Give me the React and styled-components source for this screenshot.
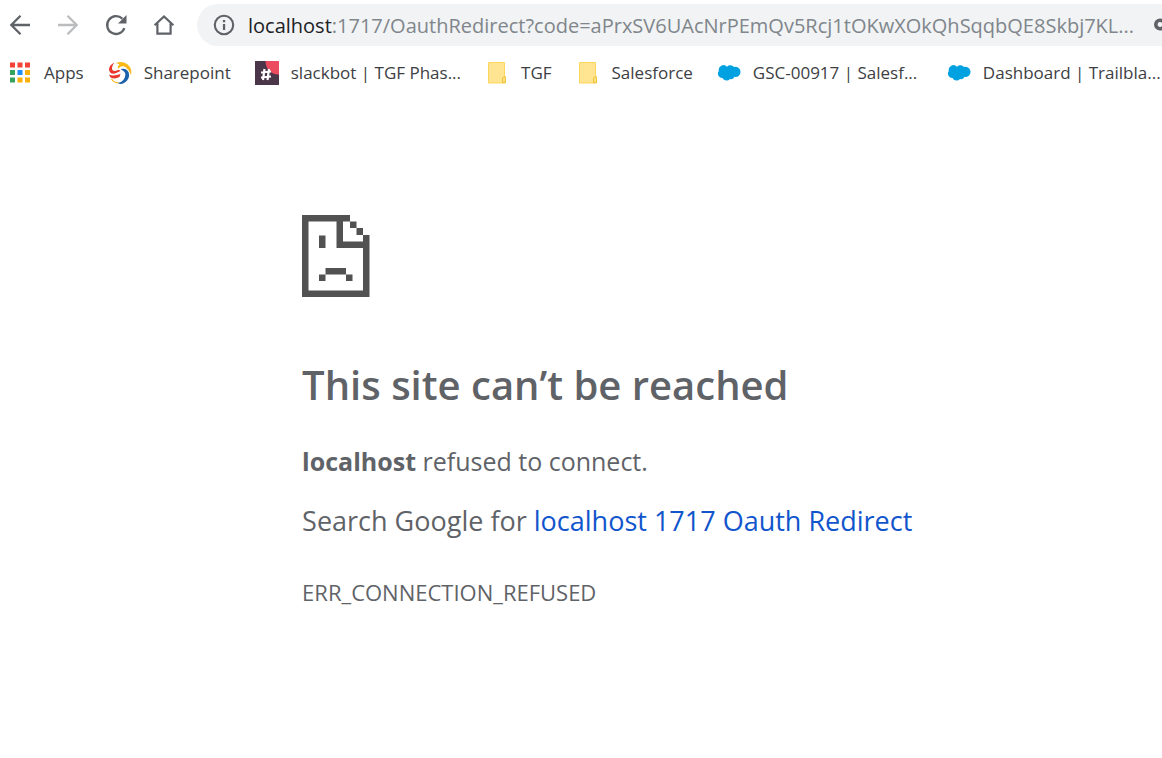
import React from 'react';
import styled, { createGlobalStyle } from 'styled-components';

const GlobalStyle = createGlobalStyle`
  * {
    box-sizing: border-box;
  }

  body {
    margin: 0;
    background: #ffffff;
    font-family: 'Open Sans', 'Noto Sans', sans-serif;
    color: #5f6368;
  }
`;

const Toolbar = styled.header`
  display: flex;
  align-items: center;
  height: 50px;
  padding-left: 8px;
`;

const NavButtons = styled.nav`
  display: flex;
  gap: 24px;
  margin-right: 21px;
`;

const NavButton = styled.button`
  display: flex;
  width: 24px;
  height: 24px;
  padding: 0;
  border: none;
  background: none;
  color: ${({ disabled }) => (disabled ? '#babcbe' : '#5f6368')};
`;

const Omnibox = styled.div`
  flex: 1;
  min-width: 0;
  display: flex;
  align-items: center;
  height: 42px;
  padding-left: 15px;
  border-radius: 21px 0 0 21px;
  background: #f1f3f4;
`;

const InfoButton = styled.button`
  display: flex;
  padding: 0;
  border: none;
  background: none;
  color: #5f6368;
`;

const Address = styled.div`
  flex: 1;
  min-width: 0;
  margin-left: 12px;
  padding-top: 2px;
  overflow: hidden;
  white-space: nowrap;
  font-size: 20px;
  line-height: 28px;
  color: #80868b;
`;

const Host = styled.span`
  color: #202124;
`;

const KeySlot = styled.div`
  display: flex;
  width: 8px;
  overflow: hidden;

  svg {
    flex: none;
  }
`;

const BookmarkBar = styled.nav`
  display: flex;
  align-items: center;
  gap: 24px;
  height: 46px;
  padding-left: 8px;
  overflow: hidden;
`;

const Bookmark = styled.a`
  flex: none;
  display: flex;
  align-items: center;
  gap: 12px;
  color: #3c4043;
  font-size: 17px;
  line-height: 24px;
  text-decoration: none;
  white-space: nowrap;
`;

const BookmarkLabel = styled.span`
  min-width: ${({ $long }) => ($long ? '170px' : '0')};
`;

const ErrorPage = styled.main`
  width: 54%;
  min-width: 620px;
  margin: 119px 0 0 26%;
`;

const Title = styled.h1`
  margin: 60px 0 0;
  font-size: 40px;
  font-weight: 600;
  line-height: 56px;
`;

const Text = styled.p`
  margin: ${({ $large }) => ($large ? '20px' : '28px')} 0 0;
  font-size: ${({ $large }) => ($large ? '27px' : '25px')};
  line-height: 40px;
`;

const SearchLink = styled.a`
  color: #1155cc;
  text-decoration: none;
`;

const ErrorCode = styled.div`
  margin-top: 36px;
  font-size: 22px;
  line-height: 30px;
`;

const BackIcon = () => (
  <svg width="24" height="24" viewBox="0 0 24 24" fill="none" stroke="currentColor" strokeWidth="2.3">
    <path d="M22 12H4M12.5 2.8L3.3 12l9.2 9.2" />
  </svg>
);

const ForwardIcon = () => (
  <svg width="24" height="24" viewBox="0 0 24 24" fill="none" stroke="currentColor" strokeWidth="2.3">
    <path d="M2 12h18M11.5 2.8l9.2 9.2-9.2 9.2" />
  </svg>
);

const ReloadIcon = () => (
  <svg width="24" height="24" viewBox="0 0 24 24">
    <path
      d="M20.4 15.2A8.9 8.9 0 1 1 18.4 5.8"
      fill="none"
      stroke="currentColor"
      strokeWidth="2.3"
    />
    <path d="M22.5 2v8.5H14z" fill="currentColor" />
  </svg>
);

const HomeIcon = () => (
  <svg width="24" height="24" viewBox="0 0 24 24" fill="none" stroke="currentColor" strokeWidth="2.2">
    <path d="M2.6 12.3L12 3.4l9.4 8.9M5.4 10.5v10.2h13.2V10.5" />
  </svg>
);

const InfoIcon = () => (
  <svg width="24" height="24" viewBox="0 0 24 24">
    <circle cx="12" cy="12" r="9.2" fill="none" stroke="currentColor" strokeWidth="2.1" />
    <path d="M10.9 11h2.3v6h-2.3zM10.9 7h2.3v2.3h-2.3z" fill="currentColor" />
  </svg>
);

const KeyIcon = () => (
  <svg width="24" height="14" viewBox="0 0 24 14">
    <circle cx="6" cy="6.5" r="4.2" fill="none" stroke="#5f6368" strokeWidth="3.6" />
    <path d="M10 5h13v3.4h-2V12h-4V8.4h-7z" fill="#5f6368" />
  </svg>
);

const appColors = [
  '#f44336', '#f44336', '#f44336',
  '#34a25c', '#2190f5', '#fbb00a',
  '#34a25c', '#fbb00a', '#fbb00a'
];

const AppsIcon = () => (
  <svg width="24" height="24" viewBox="0 0 24 24">
    {appColors.map((color, i) => (
      <rect
        key={i}
        x={2 + (i % 3) * 7.5}
        y={1.5 + Math.floor(i / 3) * 7.5}
        width="5"
        height="5"
        fill={color}
      />
    ))}
  </svg>
);

const SharepointIcon = () => (
  <svg width="24" height="24" viewBox="0 0 24 24">
    <path d="M6.5 1.5Q1 4 1 8.5Q1.5 13.5 7 12.5L12.5 10L11 8.8L7 10Q3.8 10 4 7Q4.200 4 6.500 1.500z" fill="#e8382e" />
    <path d="M1 13.500Q5 15.500 12.500 13L11.500 16Q7 18.500 2.500 16.500z" fill="#e8382e" />
    <path d="M8 2Q14-.5 19 3Q24.500 7 23 14Q21.500 9.500 18 6.500Q14 3.500 10.500 7.500Q8.500 6 11.500 3.500Q10 2.500 8 2z" fill="#fbb917" />
    <path d="M12.500 8Q18 6.500 20.500 11Q22.500 17 17.500 21Q13 24.500 9.500 21.800Q14 21.500 16 18Q18.500 13.500 16.500 11Q15 9.500 12.500 8z" fill="#1b62ad" />
    <path d="M3.500 18Q6 22 10.500 21.800" fill="none" stroke="#fbb917" strokeWidth="1.300" />
  </svg>
);

const SlackIcon = () => (
  <svg width="24" height="24" viewBox="0 0 24 24">
    <path d="M0 0h24v24H0z" fill="#4a3549" />
    <path d="M10.5 0H24v13.5Q19 14 14.5 10Q10.5 6 10.5 0z" fill="#ec4a5f" />
    <path d="M9.5 8L8 19M14 8l-1.5 11M6 11.5l10-1M6 16.5l10-1" fill="none" stroke="#ffffff" strokeWidth="2.2" />
  </svg>
);

const FolderIcon = () => (
  <svg width="24" height="24" viewBox="0 0 24 24">
    <path d="M3.5 1.5h16v14h1v6.5h-17z" fill="#ffe591" stroke="#fcd55b" />
    <path d="M17.5 21.5v-4q0-1.5 1.5-1.5t1.5 1.5v4z" fill="#ffe17c" stroke="#f0c13b" />
  </svg>
);

const CloudIcon = () => (
  <svg width="24" height="24" viewBox="0 0 24 24">
    <path
      d="M10 5.7A4.7 4.7 0 0 1 17 6.1A5 5 0 0 1 23.5 10.5A5 5 0 0 1 17.5 15.8A3.6 3.6 0 0 1 13 18A4.6 4.6 0 0 1 5.5 17A4.4 4.4 0 0 1 1.8 10A4.8 4.8 0 0 1 10 5.7z"
      fill="#00a1e0"
    />
  </svg>
);

const SadPageIcon = () => (
  <svg width="68" height="82" viewBox="0 0 68 82" fill="#525252" display="block" aria-hidden="true">
    <path d="M0 0h48v6.5H41V26.5H61V20h6.5V82H0zM6.5 6.5V75.5H61V33H34.5V6.5z" fillRule="evenodd" />
    <path d="M48 6.5h6.5V13H48zM54.5 13H61v7h-6.5zM17 20.5h6.5V33H17zM23.5 53h20.5v6.5H23.5zM17 59.5h6.5V66H17zM44 59.5h6.5V66H44z" />
  </svg>
);

const bookmarks = [
  { label: 'Apps', Icon: AppsIcon },
  { label: 'Sharepoint', Icon: SharepointIcon },
  { label: 'slackbot | TGF Phas...', Icon: SlackIcon, long: true },
  { label: 'TGF', Icon: FolderIcon },
  { label: 'Salesforce', Icon: FolderIcon },
  { label: 'GSC-00917 | Salesf...', Icon: CloudIcon, long: true },
  { label: 'Dashboard | Trailbla...', Icon: CloudIcon, long: true }
];

const App = () => {
  return (
    <>
      <GlobalStyle />
      <Toolbar>
        <NavButtons aria-label="Navigation">
          <NavButton aria-label="Back">
            <BackIcon />
          </NavButton>
          <NavButton aria-label="Forward" disabled>
            <ForwardIcon />
          </NavButton>
          <NavButton aria-label="Reload">
            <ReloadIcon />
          </NavButton>
          <NavButton aria-label="Home">
            <HomeIcon />
          </NavButton>
        </NavButtons>
        <Omnibox>
          <InfoButton aria-label="Site information">
            <InfoIcon />
          </InfoButton>
          <Address>
            <Host>localhost</Host>
            :1717/OauthRedirect?code=aPrxSV6UAcNrPEmQv5Rcj1tOKwXOkQhSqqbQE8Skbj7KL...
          </Address>
          <KeySlot>
            <KeyIcon />
          </KeySlot>
        </Omnibox>
      </Toolbar>
      <BookmarkBar aria-label="Bookmarks">
        {bookmarks.map(({ label, Icon, long }) => (
          <Bookmark href="#" key={label}>
            <Icon />
            <BookmarkLabel $long={long}>{label}</BookmarkLabel>
          </Bookmark>
        ))}
      </BookmarkBar>
      <ErrorPage>
        <SadPageIcon />
        <Title>This site can’t be reached</Title>
        <Text>
          <b>localhost</b> refused to connect.
        </Text>
        <Text $large>
          Search Google for <SearchLink href="#">localhost 1717 Oauth Redirect</SearchLink>
        </Text>
        <ErrorCode>ERR_CONNECTION_REFUSED</ErrorCode>
      </ErrorPage>
    </>
  );
};

export default App;
